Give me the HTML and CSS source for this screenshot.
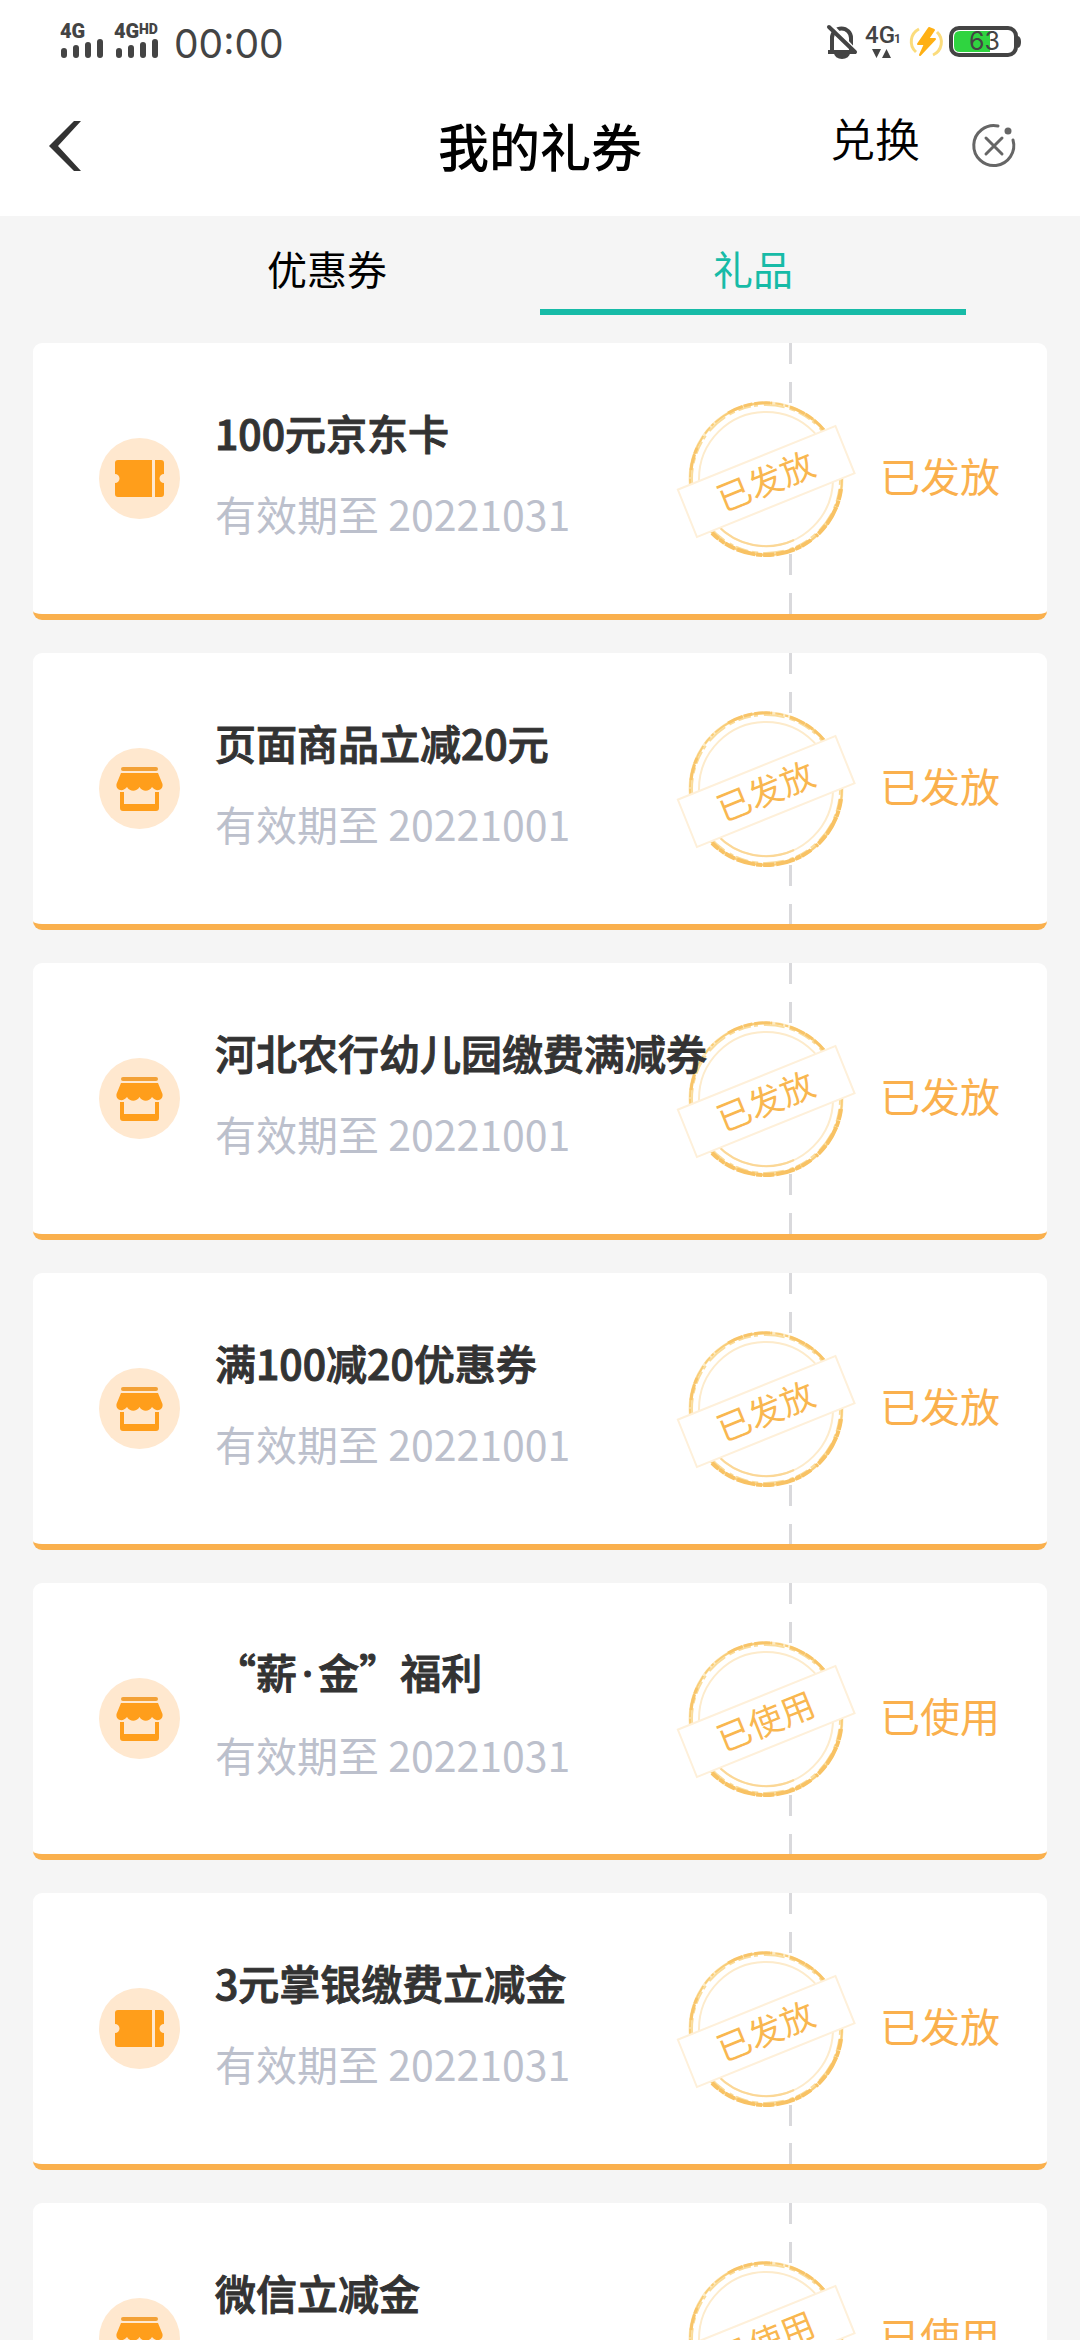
FILE: index.html
```html
<!DOCTYPE html>
<html lang="zh-CN">
<head>
    <meta charset="UTF-8">
    <meta name="viewport" content="width=device-width, initial-scale=1">
    <title>我的礼券</title>
    <link rel="stylesheet" href="styles.css">
</head>
<body>
    <!-- shared icons -->
    <svg class="sprite" width="0" height="0" aria-hidden="true">
        <symbol id="ticket" viewBox="0 0 81 81">
            <circle cx="40.5" cy="40.5" r="40.5" fill="#ffe8cf"/>
            <path d="M19 22h34v37H19q-3 0-3-3V45a4.5 4.5 0 0 0 0-9V25q0-3 3-3zM56 22h6q3 0 3 3v11a4.5 4.5 0 0 0 0 9v11q0 3-3 3h-6z" fill="#ff9e1b"/>
        </symbol>
        <symbol id="shop" viewBox="0 0 81 81">
            <circle cx="40.5" cy="40.5" r="40.5" fill="#ffe8cf"/>
            <rect x="22" y="19" width="37" height="4" rx="2" fill="#f3a136"/>
            <path d="M22 25h37l4.5 11c1 7-7 8-10.5 3c-3 5-9.5 5-12.5 0c-3 5-9.5 5-12.5 0c-3.500 5-11.5 4-10.5-3z" fill="#ff9e1b"/>
            <path d="M21 44h4v12h31V44h4v16q0 3-3 3H24q-3 0-3-3z" fill="#ff9e1b"/>
        </symbol>
        <symbol id="ring" viewBox="0 0 180 160">
            <circle cx="90" cy="80" r="77" fill="#fff"/>
            <g fill="none">
                <circle cx="90" cy="80" r="76" stroke="#fdebc4" stroke-width="3"/>
                <circle cx="90" cy="80" r="76" stroke="#f9cd78" stroke-width="2" stroke-dasharray="14 2 5 1 22 3 8 2 3 2 17 1"/>
                <circle cx="90" cy="80" r="74" stroke="#fadc9c" stroke-width="2" stroke-dasharray="6 4 13 3 4 6 21 5"/>
                <path d="M52 14A76 76 0 0 1 96 4M114 8A76 76 0 0 1 148 31M15 71A76 76 0 0 1 21 49" stroke="#f8c468" stroke-width="3" stroke-dasharray="16 1 9 2"/>
                <path d="M165 90A76 76 0 0 1 140 137M135 141A76 76 0 0 1 36 134" stroke="#f8c264" stroke-width="4" stroke-dasharray="11 1 6 1 19 2"/>
                <circle cx="90" cy="80" r="67" stroke="#fdebcb" stroke-width="2"/>
                <path d="M41 126A67 67 0 0 0 118 141" stroke="#fbd796" stroke-width="2"/>
            </g>
            <rect x="5" y="57" width="170" height="51" transform="rotate(-22 90 82)" fill="#fff" stroke="#fef0da" stroke-width="2"/>
        </symbol>
    </svg>

    <div class="statusbar">
        <div class="signals">
            <svg width="44" height="40" viewBox="0 0 44 40">
                <text class="net" x="0" y="16">4G</text>
                <path class="bars" d="M4 29v4M16 26v7M28 23v10M40 20v13"/>
            </svg>
            <svg width="50" height="40" viewBox="0 0 50 40">
                <text class="net" x="0" y="16">4G</text>
                <text class="hd" x="25" y="12">HD</text>
                <path class="bars" d="M5 29v4M17 26v7M29 23v10M41 20v13"/>
            </svg>
            <span class="time">00:00</span>
        </div>
        <div class="indicators">
            <svg width="32" height="36" viewBox="0 0 32 36">
                <path d="M2 28h28M6 28V14a9.5 9.5 0 0 1 19 0v14" fill="none" stroke="#444" stroke-width="4"/>
                <path d="M8 29h16a8 6 0 0 1-16 0z" fill="#444"/>
                <path d="M5 0l26 28" stroke="#fff" stroke-width="3"/>
                <path d="M3 3l26 25" stroke="#444" stroke-width="4" stroke-linecap="round"/>
            </svg>
            <svg width="38" height="36" viewBox="0 0 38 36">
                <text class="net4" x="0" y="19">4G</text>
                <text class="sim" x="29" y="19">1</text>
                <path d="M7 25h9l-4.5 9zM17 34h9l-4.5-9z" fill="#444"/>
            </svg>
            <svg width="32" height="32" viewBox="0 0 32 32">
                <path d="M9 3A14 14 0 0 0 6 26M23 29A14 14 0 0 0 27 6" fill="none" stroke="#fbdc7c" stroke-width="3"/>
                <path d="M19 2L8 18h7l-5 11L25 13h-7l6-9z" fill="#ffb014" stroke="#ffb014" stroke-width="2" stroke-linejoin="round"/>
            </svg>
            <svg width="73" height="32" viewBox="0 0 73 32">
                <rect x="2" y="2" width="65" height="27" rx="8" fill="#fff" stroke="#444" stroke-width="4"/>
                <path d="M11 5h30v21H11q-6 0-6-6v-9q0-6 6-6z" fill="#2fd440"/>
                <path d="M69 10q3 1 3 6t-3 6z" fill="#444"/>
                <text class="level" x="20" y="24">63</text>
            </svg>
        </div>
    </div>

    <header class="navbar">
        <button class="back" aria-label="返回">
            <svg width="32" height="50" viewBox="0 0 32 50"><path d="M25 0h7L9 25l23 25h-7L0 25z" fill="#333"/></svg>
        </button>
        <h1>我的礼券</h1>
        <div class="actions">
            <a class="redeem" href="#">兑换</a>
            <button class="close" aria-label="关闭">
                <svg width="44" height="44" viewBox="0 0 44 44">
                    <g fill="none" stroke="#666" stroke-width="3" stroke-linecap="round">
                        <path d="M26 2A20 20 0 1 0 41 16"/>
                        <path d="M14 14l16 16M30 14L14 30"/>
                    </g>
                    <circle cx="36" cy="7" r="3.5" fill="#666"/>
                </svg>
            </button>
        </div>
    </header>

    <nav class="tabs">
        <a class="tab" href="#">优惠券</a>
        <a class="tab active" href="#">礼品</a>
    </nav>

    <ul class="list">
        <li class="card">
            <svg class="icon"><use href="#ticket"/></svg>
            <div class="info">
                <h2>100元京东卡</h2>
                <p>有效期至 20221031</p>
            </div>
            <div class="divider">
                <svg class="stamp" viewBox="0 0 180 160"><use href="#ring"/><text x="90" y="95" transform="rotate(-22 90 83)">已发放</text></svg>
            </div>
            <span class="state">已发放</span>
        </li>
        <li class="card">
            <svg class="icon"><use href="#shop"/></svg>
            <div class="info">
                <h2>页面商品立减20元</h2>
                <p>有效期至 20221001</p>
            </div>
            <div class="divider">
                <svg class="stamp" viewBox="0 0 180 160"><use href="#ring"/><text x="90" y="95" transform="rotate(-22 90 83)">已发放</text></svg>
            </div>
            <span class="state">已发放</span>
        </li>
        <li class="card">
            <svg class="icon"><use href="#shop"/></svg>
            <div class="info">
                <h2>河北农行幼儿园缴费满减券</h2>
                <p>有效期至 20221001</p>
            </div>
            <div class="divider">
                <svg class="stamp" viewBox="0 0 180 160"><use href="#ring"/><text x="90" y="95" transform="rotate(-22 90 83)">已发放</text></svg>
            </div>
            <span class="state">已发放</span>
        </li>
        <li class="card">
            <svg class="icon"><use href="#shop"/></svg>
            <div class="info">
                <h2>满100减20优惠券</h2>
                <p>有效期至 20221001</p>
            </div>
            <div class="divider">
                <svg class="stamp" viewBox="0 0 180 160"><use href="#ring"/><text x="90" y="95" transform="rotate(-22 90 83)">已发放</text></svg>
            </div>
            <span class="state">已发放</span>
        </li>
        <li class="card">
            <svg class="icon"><use href="#shop"/></svg>
            <div class="info">
                <h2>“薪<span class="dot">·</span>金”福利</h2>
                <p>有效期至 20221031</p>
            </div>
            <div class="divider">
                <svg class="stamp" viewBox="0 0 180 160"><use href="#ring"/><text x="90" y="95" transform="rotate(-22 90 83)">已使用</text></svg>
            </div>
            <span class="state">已使用</span>
        </li>
        <li class="card">
            <svg class="icon"><use href="#ticket"/></svg>
            <div class="info">
                <h2>3元掌银缴费立减金</h2>
                <p>有效期至 20221031</p>
            </div>
            <div class="divider">
                <svg class="stamp" viewBox="0 0 180 160"><use href="#ring"/><text x="90" y="95" transform="rotate(-22 90 83)">已发放</text></svg>
            </div>
            <span class="state">已发放</span>
        </li>
        <li class="card">
            <svg class="icon"><use href="#shop"/></svg>
            <div class="info">
                <h2>微信立减金</h2>
                <p>有效期至 20221031</p>
            </div>
            <div class="divider">
                <svg class="stamp" viewBox="0 0 180 160"><use href="#ring"/><text x="90" y="95" transform="rotate(-22 90 83)">已使用</text></svg>
            </div>
            <span class="state">已使用</span>
        </li>
    </ul>
</body>
</html>
```
FILE: styles.css
```css
* {
    box-sizing: border-box;
}
html {
    scrollbar-width: none;
}
body {
    margin: 0;
    background-color: #f5f5f5;
    font-family: "Noto Sans CJK SC", sans-serif;
    color: #000;
}
h1, h2, p, ul {
    margin: 0;
    padding: 0;
}
a {
    color: inherit;
    text-decoration: none;
}
button {
    padding: 0;
    border: none;
    background: none;
    cursor: pointer;
}
svg {
    display: block;
    overflow: visible;
}
.sprite {
    position: absolute;
}

/* status bar */
.statusbar {
    display: flex;
    justify-content: space-between;
    align-items: center;
    height: 84px;
    padding: 0 58px 0 60px;
    background-color: #fff;
}
.signals, .indicators {
    display: flex;
    align-items: center;
}
.signals { gap: 10px; }
.indicators { gap: 7px; }
.statusbar text {
    font-family: Roboto, sans-serif;
    fill: #444;
}
.statusbar .net { font-size: 20px; font-weight: 900; }
.statusbar .hd { font-size: 14px; font-weight: 900; }
.statusbar .net4 { font-size: 24px; font-weight: 500; }
.statusbar .sim { font-size: 12px; font-weight: 700; }
.statusbar .level { font-size: 25px; font-family: Inter, sans-serif; }
.bars {
    stroke: #444;
    stroke-width: 6;
    stroke-linecap: round;
}
.time {
    padding-top: 4px;
    font: 39px/48px Inter, sans-serif;
    color: #444;
}

/* title bar */
.navbar {
    display: grid;
    grid-template-columns: 1fr auto 1fr;
    align-items: center;
    height: 132px;
    padding: 0 64px 8px;
    background-color: #fff;
}
.back {
    justify-self: start;
    margin-left: -15px;
}
.navbar h1 {
    font-size: 51px;
    font-weight: 500;
    line-height: 60px;
    padding-bottom: 2px;
}
.actions {
    display: flex;
    justify-content: flex-end;
    align-items: center;
    gap: 52px;
}
.redeem {
    font-size: 45px;
    font-weight: 350;
    line-height: 60px;
    padding-bottom: 16px;
}

/* tabs */
.tabs {
    display: flex;
    padding: 0 114px;
    margin-bottom: 28px;
}
.tab {
    flex: 1;
    padding: 22px 0 11px;
    border-bottom: 6px solid transparent;
    font-size: 40px;
    line-height: 60px;
    text-align: center;
}
.tab.active {
    color: #17bba7;
    border-color: #17bba7;
}

/* coupon list */
.list {
    display: flex;
    flex-direction: column;
    gap: 33px;
    padding: 0 33px;
    list-style: none;
}
.card {
    display: flex;
    align-items: center;
    min-height: 277px;
    padding-left: 66px;
    border-bottom: 6px solid #fab04d;
    border-radius: 9px;
    background-color: #fff;
}
.icon {
    width: 81px;
    height: 81px;
}
.info {
    flex: 1;
    display: grid;
    gap: 21px;
    position: relative;
    z-index: 1;
    padding: 0 0 12px 35px;
    line-height: 60px;
    white-space: nowrap;
}
.info h2 {
    font-size: 41px;
    font-weight: 500;
    color: #333;
    -webkit-text-stroke: 1px #333;
}
.info p {
    font-size: 41px;
    color: #bcc0cc;
}
.dot {
    padding: 0 5px;
    font-family: "Noto Sans", sans-serif;
}
.divider {
    position: relative;
    align-self: stretch;
    width: 3px;
    background:
        repeating-linear-gradient(to bottom, #d9d9dc 0 21px, #fff 21px 39px) top / 3px 50% no-repeat,
        repeating-linear-gradient(to top, #d9d9dc 0 21px, #fff 21px 39px) bottom / 3px 50% no-repeat;
}
.stamp {
    position: absolute;
    top: 50%;
    right: -64px;
    width: 180px;
    height: 160px;
    margin-top: -80px;
}
.stamp text {
    font-size: 34px;
    text-anchor: middle;
    fill: #f9b750;
}
.state {
    width: 255px;
    padding: 0 0 8px 88px;
    font-size: 40px;
    line-height: 60px;
    color: #fab04d;
    white-space: nowrap;
}
```
